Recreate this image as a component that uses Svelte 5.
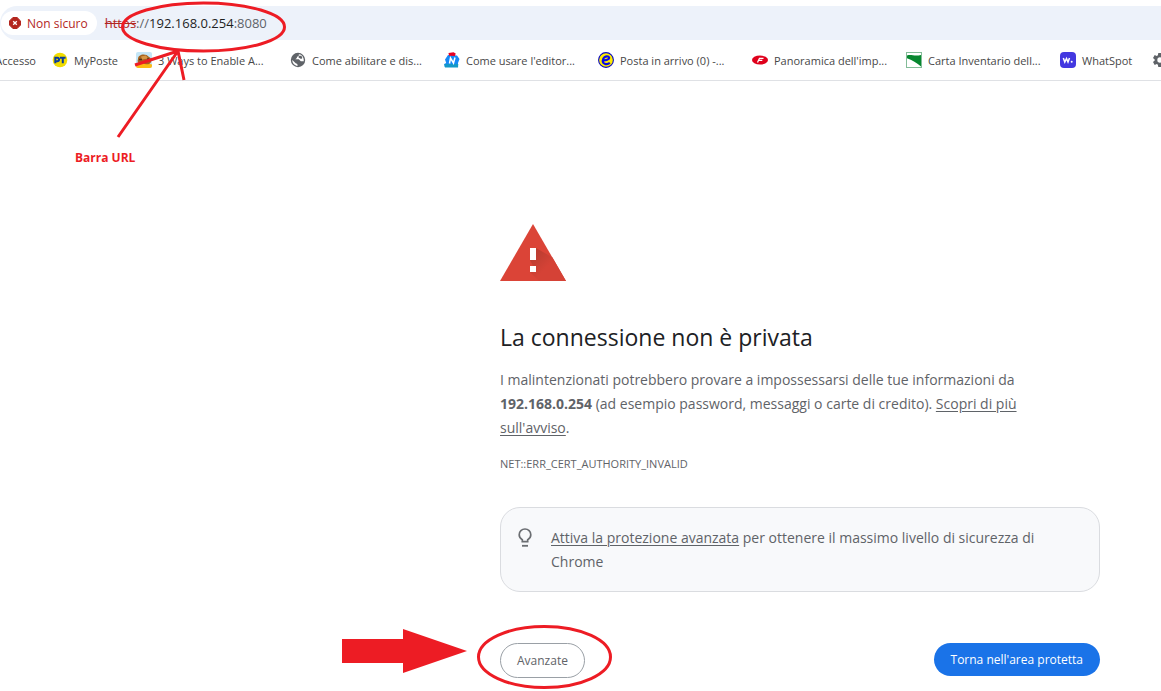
<script>
  const bookmarks = [
    { icon: 'poste', label: 'MyPoste', size: 'small' },
    { icon: 'ways', label: '3 Ways to Enable A...', size: 'wide' },
    { icon: 'globe', label: 'Come abilitare e dis...', size: 'wide' },
    { icon: 'editor', label: "Come usare l'editor...", size: 'wide' },
    { icon: 'mail', label: 'Posta in arrivo (0) -...', size: 'wide' },
    { icon: 'panorama', label: "Panoramica dell'imp...", size: 'wide' },
    { icon: 'map', label: 'Carta Inventario dell...', size: 'wide' },
    { icon: 'whatspot', label: 'WhatSpot', size: 'medium' },
    { icon: 'gear', label: '', size: 'icon' }
  ];
</script>

<div class="page">
  <header>
    <div class="address">
      <button class="chip" type="button">
        <svg width="12" height="12" viewBox="0 0 12 12" aria-hidden="true">
          <path d="M3.900 .5h4.200l3.400 3.400v4.200l-3.400 3.400H3.900L.5 8.100V3.900z" fill="#b3261e" stroke="#b3261e" stroke-linejoin="round" />
          <path d="M4.200 4.200l3.600 3.600M7.800 4.200l-3.600 3.600" stroke="#fff" stroke-width="1.300" />
        </svg>
        Non sicuro
      </button>
      <span class="url"><s>https</s><span class="dim">://</span>192.168.0.254<span class="dim">:8080</span></span>
    </div>
    <nav aria-label="Preferiti">
      <a class="first" href="#accesso">Accesso</a>
      {#each bookmarks as b}
        <a href="#{b.icon}" class={b.size} aria-label={b.label || 'Impostazioni'}>
          <svg width="16" height="16" viewBox="0 0 16 16" aria-hidden="true">
            {#if b.icon === 'poste'}
              <circle cx="8" cy="8" r="7.300" fill="#f0dc00" />
              <g fill="none" stroke="#0a3c9c" stroke-width="2"><path d="M3.300 11.200V5.800h2c2.300 0 2.300 3.400 0 3.400h-2" /><path d="M8 5.800h5.600M10.800 5.800v5.400" /></g>
            {:else if b.icon === 'ways'}
              <rect width="16" height="16" rx="2" fill="#c4e6f7" />
              <path d="M0 11.500c4-1.500 11-.5 16 1V14a2 2 0 0 1-2 2H2a2 2 0 0 1-2-2z" fill="#fdbb12" />
              <path d="M2 7c0-5 8-6 11-2 3 1 3 6 0 7-3 .8-5-1-8-.5-3 0-4-2-3-4.500z" fill="#a8631f" />
              <path d="M5 4.500l5-1 2 3-6 1z" fill="#d69645" />
              <path d="M3 7.500h3M12 6v4" stroke="#54301a" stroke-width="1.300" />
            {:else if b.icon === 'globe'}
              <circle cx="8" cy="8" r="7.200" fill="#5f6368" />
              <path d="M8.800 2.200c.4 1.300-.5 2.300-1.900 2.500v1.200L5.300 7.200h3.500l2 2c1.200.2 2.300.2 3 0 .2-2.900-1.300-5.600-3.400-6.600zM2.300 8l3.400 3.300 1.600.6.300 2C4.700 13.700 2.200 11.300 2.300 8z" fill="#fff" />
              <path d="M8.800 3.700l2.600.1 1 2.100-1.300 1.200-2.500-1.700z" fill="#5f6368" />
            {:else if b.icon === 'editor'}
              <path d="M4 3l9 .5L15.500 7l-1.500 4v4H.8l-.6-3 2-1L1 7.500z" fill="#1688f5" />
              <path d="M.3 12h14l-.3 3.500H1z" fill="#1398c8" />
              <path d="M4.500 1l5-.8 2.200 1.300-.7 2.500-6-.2z" fill="#e60023" />
              <path d="M5.500 11.500l1-5.500 3 5 1.500-5.500" fill="none" stroke="#fff" stroke-width="1.500" />
            {:else if b.icon === 'mail'}
              <circle cx="8" cy="8" r="7.400" fill="#ffec00" stroke="#0808c8" stroke-width="1.100" />
              <path d="M11.800 10.800C9.800 12.800 5 12.800 4.700 9 4.500 5.300 8 3.700 10.200 4.600c2.300 1.300.2 3.700-4.500 3.700" fill="none" stroke="#0808e8" stroke-width="2.200" />
            {:else if b.icon === 'panorama'}
              <ellipse cx="8" cy="8" rx="8" ry="4.500" fill="#df001c" />
              <path d="M5.500 10.500L7.500 6.300h4M6.800 8.300h3.500" fill="none" stroke="#fff" stroke-width="1.300" />
            {:else if b.icon === 'map'}
              <rect x=".5" y=".5" width="15" height="15" fill="#fff" stroke="#83bc98" />
              <path d="M1 3.500c4-1.500 7 1 14-.5v11.500C11 11 6 8 1 6.200z" fill="#07872f" />
            {:else if b.icon === 'whatspot'}
              <rect width="16" height="16" rx="4" fill="#4338e0" />
              <path d="M3.300 6l1.500 4L6.500 6.500 8 10l1.500-4" fill="none" stroke="#fff" stroke-width="1.500" />
              <circle cx="11.700" cy="9.800" r="1" fill="#fff" />
            {:else}
              <path d="M6.300 1h3.400l.4 2.200 1.200.7 2-.8L15 6l-1.700 1.400v1.200L15 10l-1.700 2.900-2-.8-1.200.7-.4 2.200H6.300l-.4-2.200-1.200-.7-2 .8L1 10l1.700-1.400V7.400L1 6l1.700-2.900 2 .8 1.200-.7z" fill="#5f6368" />
              <circle cx="8" cy="8" r="2.700" fill="#fff" />
            {/if}
          </svg>
          {#if b.label}<span>{b.label}</span>{/if}
        </a>
      {/each}
    </nav>
  </header>

  <main>
    <svg class="warning" width="66" height="57" viewBox="0 0 66 57" role="img" aria-label="Avviso">
      <defs>
        <linearGradient id="shade" gradientUnits="userSpaceOnUse" x1="33" y1="33" x2="48" y2="48">
          <stop offset="0" stop-color="#bd3d31" /><stop offset=".8" stop-color="#d54236" />
        </linearGradient>
      </defs>
      <path d="M33 0l33 57H0z" fill="#db4437" />
      <path d="M36 24l16.500 9.500L66 57H39l-9-9 4-4-4-8z" fill="url(#shade)" />
      <path d="M30 24h6v12h-6zM30 42h6v6h-6z" fill="#fff" />
    </svg>
    <h1>La connessione non è privata</h1>
    <p>I malintenzionati potrebbero provare a impossessarsi delle tue informazioni da <strong>192.168.0.254</strong> (ad esempio password, messaggi o carte di credito). <a href="#avviso">Scopri di più sull'avviso</a>.</p>
    <div class="code">NET::ERR_CERT_AUTHORITY_INVALID</div>
    <section class="tip">
      <svg width="20" height="24" viewBox="0 0 20 20" aria-hidden="true">
        <path d="M7.300 13.700v-2C5.500 10.700 4.200 9 4.200 6.800a5.800 5.800 0 0 1 11.600 0c0 2.200-1.300 3.900-3.100 4.900v2z" fill="none" stroke="#6b6e72" stroke-width="1.700" />
        <path d="M7 17.800h6" stroke="#6b6e72" stroke-width="1.800" />
      </svg>
      <div><a href="#protezione">Attiva la protezione avanzata</a> per ottenere il massimo livello di sicurezza di Chrome</div>
    </section>
    <div class="actions">
      <button class="secondary" type="button">Avanzate</button>
      <button class="primary" type="button">Torna nell'area protetta</button>
    </div>
  </main>

  <svg class="marks" width="640" height="691" viewBox="0 0 640 691" aria-hidden="true">
    <g fill="none" stroke="#ed1c24" stroke-width="3">
      <ellipse cx="203.500" cy="27" rx="81" ry="24" />
      <path d="M118 137L178 51M135 65l43-14 6 29" />
      <ellipse cx="544.500" cy="657" rx="66" ry="30.500" />
    </g>
    <path d="M342 639h61v-10l64 22-64 22v-10h-61z" fill="#ed1c24" />
  </svg>
  <strong class="note">Barra URL</strong>
</div>

<style>
  :global(body) {
    margin: 0;
    background: #fff;
  }
  .page {
    position: relative;
    overflow: hidden;
    font-family: "Segoe UI", "Open Sans", "Noto Sans", sans-serif;
    color: #5f6368;
  }
  button {
    font: inherit;
    border: 0;
    cursor: pointer;
  }
  header {
    padding-top: 6px;
    border-bottom: 1px solid #dfe1e5;
  }
  .address {
    display: flex;
    align-items: center;
    gap: 8px;
    height: 34px;
    padding-left: 1px;
    border-radius: 17px 0 0 17px;
    background: #edf2fa;
    font-size: 13px;
  }
  .chip {
    display: flex;
    align-items: center;
    gap: 6px;
    height: 24px;
    padding: 0 9px 0 8px;
    border-radius: 12px;
    background: #fff;
    color: #b3261e;
    font-size: 12px;
  }
  .url {
    color: #1f1f1f;
  }
  .url s {
    color: #b3261e;
  }
  .dim {
    color: #5f6368;
  }
  nav {
    display: flex;
    align-items: center;
    gap: 16px;
    height: 40px;
    margin-left: -8px;
    overflow: hidden;
    font-size: 11px;
  }
  nav a {
    display: flex;
    flex: none;
    align-items: center;
    gap: 6px;
    color: #474747;
    text-decoration: none;
    white-space: nowrap;
  }
  nav .first {
    justify-content: flex-end;
    width: 44px;
  }
  nav .small {
    width: 68px;
  }
  nav .medium {
    width: 76px;
  }
  nav .wide {
    width: 138px;
  }
  nav svg {
    flex: none;
  }
  main {
    max-width: 600px;
    margin: 0 61px 0 auto;
    padding: 143px 0 13px;
    font-size: 14px;
    line-height: 24px;
  }
  .warning {
    display: block;
  }
  h1 {
    margin: 40px 0 14px;
    color: #202124;
    font-size: 23px;
    font-weight: 400;
    line-height: 33px;
  }
  p {
    margin: 0;
    padding-right: 40px;
  }
  main a {
    color: inherit;
    text-underline-offset: 2px;
  }
  .code {
    margin: 12px 0 31px;
    font-size: 11px;
  }
  .tip {
    display: flex;
    gap: 16px;
    padding: 18px 40px 17px 14px;
    border: 1px solid #dadce0;
    border-radius: 20px;
    background: #f8f9fb;
  }
  .tip svg {
    flex: none;
  }
  .actions {
    display: flex;
    align-items: flex-start;
    justify-content: space-between;
    margin-top: 51px;
    font-size: 12px;
  }
  .actions button {
    padding: 0 17px;
    border-radius: 18px;
  }
  .actions .secondary {
    height: 35px;
    padding: 0 16px;
    border: 1px solid #9aa0a6;
    background: #fff;
    color: #5f6368;
  }
  .actions .primary {
    height: 33px;
    background: #1a73e8;
    color: #fff;
  }
  .marks {
    position: absolute;
    top: 0;
    left: 0;
    pointer-events: none;
  }
  .note {
    position: absolute;
    top: 150px;
    left: 75px;
    color: #ed1c24;
    font-size: 12px;
    line-height: 16px;
  }
</style>
